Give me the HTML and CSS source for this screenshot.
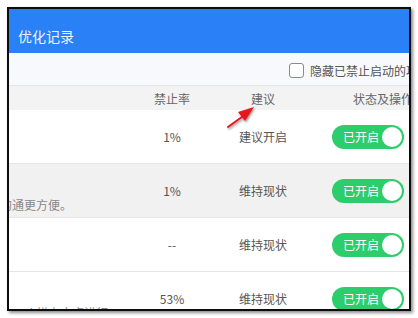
FILE: index.html
```html
<!DOCTYPE html>
<html lang="zh-CN">
<head>
<meta charset="utf-8">
<title>优化记录</title>
<link rel="stylesheet" href="styles.css">
</head>
<body>
<div class="page">
  <div class="frame">
    <div class="topbar">优化记录</div>
    <div class="toolbar">
      <span class="checkbox"></span>
      <span class="check-label">隐藏已禁止启动的项</span>
    </div>
    <div class="thead">
      <div class="c1"></div>
      <div class="c2">禁止率</div>
      <div class="c3">建议</div>
      <div class="c4 head4">状态及操作</div>
    </div>
    <div class="row">
      <div class="c1"></div>
      <div class="c2">1%</div>
      <div class="c3">建议开启</div>
      <div class="c4"><span class="toggle"><span class="tlabel">已开启</span><span class="knob"></span></span></div>
    </div>
    <div class="row alt">
      <div class="c1 desc"><span class="desc-text">沟通更方便。</span></div>
      <div class="c2">1%</div>
      <div class="c3">维持现状</div>
      <div class="c4"><span class="toggle"><span class="tlabel">已开启</span><span class="knob"></span></span></div>
    </div>
    <div class="row">
      <div class="c1"></div>
      <div class="c2">--</div>
      <div class="c3">维持现状</div>
      <div class="c4"><span class="toggle"><span class="tlabel">已开启</span><span class="knob"></span></span></div>
    </div>
    <div class="row">
      <div class="c1 desc"><span class="desc-text desc-last">Dock栏上方点进行</span></div>
      <div class="c2">53%</div>
      <div class="c3">维持现状</div>
      <div class="c4"><span class="toggle"><span class="tlabel">已开启</span><span class="knob"></span></span></div>
    </div>
    <svg class="arrow" width="40" height="34" viewBox="0 0 40 34">
      <defs>
        <filter id="sh" x="-30%" y="-30%" width="160%" height="160%">
          <feDropShadow dx="1" dy="1.5" stdDeviation="1" flood-color="#000" flood-opacity="0.45"/>
        </filter>
      </defs>
      <g filter="url(#sh)">
        <line x1="4" y1="27" x2="20" y2="15.5" stroke="#e8141c" stroke-width="2" stroke-linecap="round"/>
        <polygon points="30,7 14,12 21,21" fill="#e8141c"/>
      </g>
    </svg>
  </div>
</div>
</body>
</html>
```
FILE: styles.css
```css
* { box-sizing: border-box; }
html, body { margin: 0; padding: 0; background: #fff; }
body {
  font-family: "Noto Sans CJK SC", "Noto Sans", sans-serif;
  font-size: 12px;
  color: #555;
}
.page { padding: 7px; }
.frame {
  position: relative;
  width: 404px;
  height: 304px;
  border: 2px solid #0c0c0c;
  overflow: hidden;
  background: #fff;
  box-shadow: 2px 2px 3px rgba(0,0,0,0.45);
}
.topbar {
  height: 44px;
  background: #2a80f6;
  color: #eef4ff;
  font-size: 14px;
  line-height: 20px;
  padding: 17px 0 0 9px;
}
.toolbar {
  height: 33px;
  background: #f7f9fc;
  border-bottom: 1px solid #e3e5e8;
  display: flex;
  align-items: center;
  padding: 2px 0 0 280px;
  white-space: nowrap;
}
.checkbox {
  flex: none;
  width: 15px;
  height: 15px;
  border: 1px solid #8a8a8a;
  border-radius: 3px;
  background: #fff;
  margin-right: 6px;
}
.check-label { color: #555; font-size: 12px; }
.thead, .row {
  display: grid;
  grid-template-columns: 128px 70px 112px 90px;
  align-items: center;
  white-space: nowrap;
}
.thead {
  height: 24px;
  background: #f3f3f3;
  color: #666;
}
.row {
  height: 54px;
  border-bottom: 1px solid #e6e6e6;
  background: #fff;
}
.row.alt { background: #f1f1f1; }
.c2, .c3 { text-align: center; }
.head4 { padding-left: 34px; }
.c4 { overflow: visible; }
.c1 { height: 100%; }
.desc {
  display: flex;
  align-items: flex-end;
  padding-bottom: 4px;
  overflow: hidden;
}
.desc-text {
  color: #888;
  font-size: 12px;
  line-height: 16px;
  margin-left: -9px;
}
.desc-last { margin-left: -1px; }
.toggle {
  display: inline-flex;
  align-items: center;
  justify-content: space-between;
  margin-left: 13px;
  width: 72px;
  height: 24px;
  border-radius: 12px;
  background: #2dcd6b;
  padding: 0 2px 0 11px;
}
.tlabel { color: #fff; font-size: 12px; line-height: 16px; }
.knob {
  width: 20px;
  height: 20px;
  border-radius: 50%;
  background: #fff;
}
.arrow {
  position: absolute;
  left: 215px;
  top: 91px;
}
```
